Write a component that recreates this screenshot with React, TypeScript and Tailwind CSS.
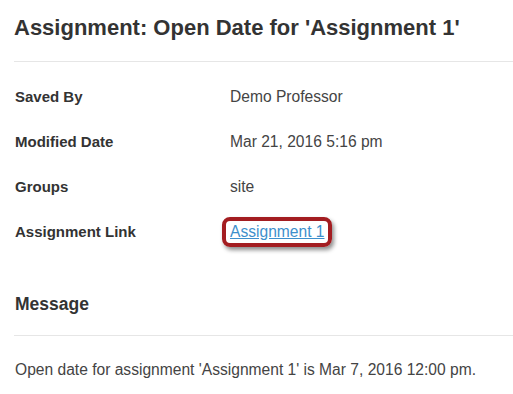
const ROWS = [
  { label: "Saved By", value: "Demo Professor" },
  { label: "Modified Date", value: "Mar 21, 2016 5:16 pm" },
  { label: "Groups", value: "site" },
]

function Row({ label, children }: { label: string; children: React.ReactNode }) {
  return (
    <div className="h-[45px] flex items-center">
      <div className="w-[216px] pl-[1px] text-[15px] leading-[20px] font-bold text-[#333]">{label}</div>
      <div className="text-[15.6px] leading-[20px] text-[#444]">{children}</div>
    </div>
  )
}

export default function App() {
  return (
    <div
      className="w-[513px] h-[394px] bg-white overflow-hidden pl-[14px]"
      style={{ fontFamily: '"Liberation Sans", Arial, sans-serif' }}
    >
      <h1 className="mt-[16px] text-[22px] leading-[24px] font-bold text-[#333]">
        Assignment: Open Date for 'Assignment 1'
      </h1>
      <div className="mt-[21px] border-t border-[#e6e6e6]" />

      <div className="mt-[12px] flex flex-col">
        {ROWS.map((r) => (
          <Row key={r.label} label={r.label}>
            {r.value}
          </Row>
        ))}
        <Row label="Assignment Link">
          <span className="-ml-[8px] inline-block border-4 border-[#a31d21] rounded-[8px] px-[4px] py-[1px] shadow-[2px_3px_4px_rgba(0,0,0,0.45)]">
            <a href="#" className="text-[#3d8fcc] underline">
              Assignment 1
            </a>
          </span>
        </Row>
      </div>

      <h2 className="mt-[38px] pl-[1px] text-[17.5px] leading-[24px] font-bold text-[#333]">Message</h2>
      <div className="mt-[19px] border-t border-[#e6e6e6]" />
      <p className="mt-[24px] pl-[1px] text-[15.6px] leading-[20px] text-[#444]">
        Open date for assignment 'Assignment 1' is Mar 7, 2016 12:00 pm.
      </p>
    </div>
  )
}
